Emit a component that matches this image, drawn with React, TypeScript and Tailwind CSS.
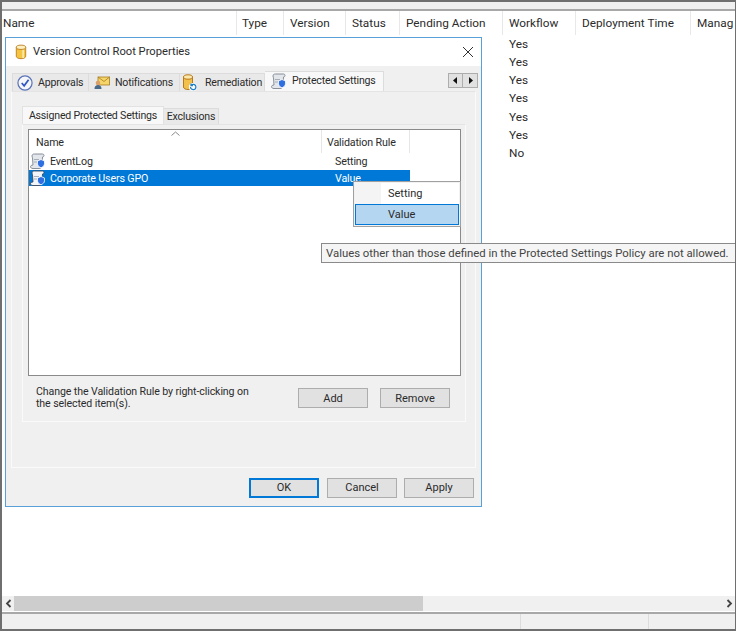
import React from "react";

const Cyl = () => (
  <svg width="12" height="16" viewBox="0 0 14 18" className="shrink-0">
    <path d="M1.500 3.500v10.500c0 1.600 2.500 2.800 5.500 2.800s5.500-1.200 5.500-2.800V3.500z" fill="#f5c542" stroke="#b8791a" />
    <path d="M9.500 5.500v10.500" stroke="#fbe9a8" strokeWidth="2" />
    <ellipse cx="7" cy="3.500" rx="5.500" ry="2.500" fill="#fdf0c0" stroke="#b8791a" />
  </svg>
);

const Check = () => (
  <svg width="16" height="16" viewBox="0 0 17 17" className="shrink-0">
    <circle cx="8.500" cy="8.500" r="7.500" fill="#f4f6fb" stroke="#5b74b8" strokeWidth="1.300" />
    <path d="M5 8.500l2.600 3L12.300 5" fill="none" stroke="#2f55c4" strokeWidth="1.800" />
  </svg>
);

const Mail = () => (
  <svg width="16" height="15" viewBox="0 0 16 15" className="shrink-0">
    <rect x="4" y="2" width="11.500" height="8" fill="#f6d66a" stroke="#a67c1e" strokeWidth=".8" />
    <path d="M4 2l6 4.500L15.500 2" fill="none" stroke="#a67c1e" strokeWidth=".8" />
    <circle cx="4" cy="8" r="2.300" fill="#d9a06a" />
    <path d="M0.500 14c0-3 1.500-4 3.500-4s3.500 1 3.500 4z" fill="#4a6a8a" />
  </svg>
);

const Remed = () => (
  <svg width="16" height="18" viewBox="0 0 16 18" className="shrink-0">
    <path d="M1.500 3v10c0 1.500 2 2.500 4.500 2.500s4.500-1 4.500-2.500V3z" fill="#f3c14b" stroke="#b8791a" />
    <ellipse cx="6" cy="3" rx="4.500" ry="2.200" fill="#fbe8ad" stroke="#b8791a" />
    <circle cx="11" cy="13" r="4" fill="#fff" />
    <path d="M8.500 13a2.700 2.700 0 1 0 1-2.100M9 9.500v2h2" fill="none" stroke="#1f7fc4" strokeWidth="1.300" />
  </svg>
);

const Shield = ({ selected = false }: { selected?: boolean }) => (
  <svg width="17" height="17" viewBox="0 0 17 17" className="shrink-0">
    <path
      d="M2 3c0-1.500 1-2 2.500-2h8c1 0 1.500.8 1.500 1.500S13.500 4 12.500 4l-.5 8c0 2-1 3.500-3 3.500H3c-1.500 0-2.500-.8-2.500-1.800S1.500 12 3 12l-.5-7C2.500 4.500 2 4 2 3z"
      fill={selected ? "#f2f6fb" : "#e3e6ea"}
      stroke={selected ? "#3d4a5c" : "#7c8590"}
      strokeWidth=".9"
    />
    <path d="M4 6.500h5M4 9h3" stroke="#98a0aa" strokeWidth=".8" />
    <path d="M7.500 8l3.500-1.500L14.500 8v2.800c0 2-1.700 3.100-3.500 4-1.800-.9-3.500-2-3.500-4z" fill="#2f6fe0" stroke="#fff" strokeWidth=".8" />
  </svg>
);

const Btn = ({ label, primary = false }: { label: string; primary?: boolean }) => (
  <div
    className={`w-[70px] h-5 flex items-center justify-center bg-[#e1e1e1] text-[11px] leading-none ${
      primary ? "border-2 border-[#0078d7]" : "border border-[#adadad]"
    }`}
  >
    {label}
  </div>
);

const columns = [
  { label: "Name", w: "w-[235px]", pl: "pl-[1px]" },
  { label: "Type", w: "w-[47px]", pl: "pl-[5px]" },
  { label: "Version", w: "w-[62px]", pl: "pl-[6px]" },
  { label: "Status", w: "w-[54px]", pl: "pl-[6px]" },
  { label: "Pending Action", w: "w-[103px]", pl: "pl-[6px]" },
  { label: "Workflow", w: "w-[73px]", pl: "pl-[6px]" },
  { label: "Deployment Time", w: "w-[115px]", pl: "pl-[6px]" },
  { label: "Manag", w: "w-[45px]", pl: "pl-[6px]" },
];

const workflow = ["Yes", "Yes", "Yes", "Yes", "Yes", "Yes", "No"];

export default function App() {
  return (
    <div
      className="relative w-[736px] h-[631px] overflow-hidden bg-white text-[#2b2b2b] flex flex-col border-2 border-r-[1px] border-[#6f6f6f]"
      style={{ fontFamily: 'Roboto, "Noto Sans", sans-serif' }}
    >
      <div className="h-[7px] bg-[#f0f0f0] shrink-0" />
      <div className="h-[2px] bg-[#a8a8a8] shrink-0" />
      <div className="h-[24px] flex shrink-0 text-[11.800px] whitespace-nowrap overflow-hidden">
        {columns.map((c) => (
          <div key={c.label} className={`${c.w} ${c.pl} pt-[2px] shrink-0 flex items-center border-r border-[#e8e8e8]`}>
            {c.label}
          </div>
        ))}
      </div>
      <div className="flex-1 pl-[507px] text-[11.800px] pt-[0.500px]">
        {workflow.map((v, i) => (
          <div key={i} className="h-[18.200px] flex items-center">
            {v}
          </div>
        ))}
      </div>
      <div className="h-[15px] bg-[#f0f0f0] flex items-stretch shrink-0 mb-[1px]">
        <div className="w-[12px] flex items-center justify-center text-[#444]">
          <svg width="7" height="9" viewBox="0 0 7 9"><path d="M5.500 1L2 4.500 5.500 8" fill="none" stroke="#444" strokeWidth="1.800" /></svg>
        </div>
        <div className="w-[409px] bg-[#cdcdcd]" />
        <div className="flex-1" />
        <div className="w-[12px] flex items-center justify-center">
          <svg width="7" height="9" viewBox="0 0 7 9"><path d="M1.500 1L5 4.500 1.500 8" fill="none" stroke="#444" strokeWidth="1.800" /></svg>
        </div>
      </div>
      <div className="h-[2px] bg-[#a8a8a8] shrink-0" />
      <div className="h-[15px] bg-[#f0f0f0] shrink-0 flex">
        <div className="w-[519px] border-r border-[#dcdcdc]" />
        <div className="w-[128px] border-r border-[#dcdcdc]" />
      </div>

      {/* dialog */}
      <div className="absolute left-[3px] top-[35px] w-[477px] h-[470px] bg-[#f0f0f0] border border-[#5aa0d8] flex flex-col">
        <div className="h-[28px] bg-white flex items-center pl-[9px] pr-[7px] gap-[6px] shrink-0">
          <Cyl />
          <span className="text-[11.200px] flex-1 whitespace-nowrap">Version Control Root Properties</span>
          <svg width="12" height="12" viewBox="0 0 12 12"><path d="M1 1l10 10M11 1L1 11" stroke="#333" strokeWidth="1" /></svg>
        </div>

        <div className="h-[25px] flex items-end pl-[6px] shrink-0 text-[10.600px] tracking-[-0.200px] whitespace-nowrap">
          <div className="h-[18px] w-[77px] flex items-center gap-[5px] pl-[4px] bg-[#e9e9e9] border border-b-0 border-[#dcdcdc]"><Check />Approvals</div>
          <div className="h-[18px] w-[91px] flex items-center gap-[5px] pl-[5px] bg-[#e9e9e9] border border-b-0 border-l-0 border-[#dcdcdc]"><Mail />Notifications</div>
          <div className="h-[18px] w-[85px] flex items-center gap-[7px] pl-[2px] bg-[#e9e9e9] border border-b-0 border-l-0 border-[#dcdcdc]"><Remed />Remediation</div>
          <div className="h-[20px] w-[119px] flex items-center gap-[4px] pl-[6px] bg-[#f8f8f8] border border-b-0 border-l-0 border-[#dcdcdc]"><Shield /><span className="pb-[2px]">Protected Settings</span></div>
          <div className="ml-auto mr-[3px] mb-[3px] flex h-[15px]">
            <div className="w-[15px] bg-[#e1e1e1] border border-[#adadad] flex items-center justify-center">
              <svg width="5" height="7" viewBox="0 0 5 7"><path d="M4 0L0 3.500 4 7z" fill="#111" /></svg>
            </div>
            <div className="w-[15px] bg-[#e1e1e1] border border-l-0 border-[#adadad] flex items-center justify-center">
              <svg width="5" height="7" viewBox="0 0 5 7"><path d="M1 0l4 3.500L1 7z" fill="#111" /></svg>
            </div>
          </div>
        </div>

        <div className="mx-[5px] h-[377px] border border-[#fafafa] border-t-[#e4e4e4] pt-[14px] px-[10px] shrink-0">
          <div className="h-[18px] flex items-end text-[10.600px] tracking-[-0.200px] whitespace-nowrap">
            <div className="h-[18px] w-[142px] flex items-center justify-center bg-[#f8f8f8] border border-b-0 border-[#e2e2e2]">Assigned Protected Settings</div>
            <div className="h-[16px] w-[55px] flex items-center justify-center bg-[#e9e9e9] border border-b-0 border-l-0 border-[#dcdcdc]">Exclusions</div>
          </div>
          <div className="h-[298px] w-[444px] border border-[#fafafa] border-t-[#e4e4e4] px-[5px] pt-[4px]">
            <div className="relative h-[247px] w-[433px] bg-white border border-[#8a8a8a] text-[10.700px] tracking-[-0.150px] whitespace-nowrap">
              <div className="h-[23px] flex">
                <div className="w-[293px] pl-[7px] flex items-end border-r border-[#e6e6e6] relative">
                  <span className="leading-[16px] mb-[2px]">Name</span>
                  <svg className="absolute left-[142px] top-[1px]" width="9" height="5" viewBox="0 0 9 5"><path d="M.5 4.500l4-3.500 4 3.500" fill="none" stroke="#888" /></svg>
                </div>
                <div className="w-[88px] pl-[5px] flex items-end border-r border-[#e6e6e6]">
                  <span className="leading-[16px] mb-[2px]">Validation Rule</span>
                </div>
              </div>
              <div className="h-[17px] flex items-center pl-[1px] w-[381px]">
                <Shield />
                <span className="ml-[3px] w-[285px] pt-[2px]">EventLog</span>
                <span className="pt-[2px]">Setting</span>
              </div>
              <div className="h-[16px] flex items-center pl-[1px] w-[381px] bg-[#0078d7] text-white">
                <Shield selected />
                <span className="ml-[3px] w-[285px] pt-[2px]">Corporate Users GPO</span>
                <span className="pt-[2px]">Value</span>
              </div>
            </div>
            <div className="flex items-center h-[46px] pl-[8px] pr-[10px] pb-[2px]">
              <div className="text-[10.600px] tracking-[-0.100px] leading-[12px] flex-1 whitespace-nowrap">
                Change the Validation Rule by right-clicking on
                <br />
                the selected item(s).
              </div>
              <Btn label="Add" />
              <div className="w-[12px]" />
              <Btn label="Remove" />
            </div>
          </div>
        </div>

        <div className="flex justify-end items-center gap-[7px] pr-[7px] pt-[1px] flex-1">
          <div className="mr-[1px]"><Btn label="OK" primary /></div>
          <Btn label="Cancel" />
          <Btn label="Apply" />
        </div>
      </div>

      {/* context menu */}
      <div className="absolute left-[351px] top-[179px] w-[108px] h-[46px] bg-[#f2f2f2] border border-[#a0a0a0] p-[1px] flex flex-col text-[11px]">
        <div className="h-[22px] flex items-center pl-[33px] pt-[2px] bg-[linear-gradient(to_right,#f4f4f4_26px,#ffffff_26px)]">Setting</div>
        <div className="h-[21px] flex items-center pl-[32px] pt-[1px] bg-[#b5d6f0] border border-[#0078d7]">Value</div>
      </div>

      {/* tooltip */}
      <div className="absolute left-[319px] top-[241px] w-[415px] h-[20px] bg-[#f5f5f5] border border-[#8a8a8a] flex items-center pl-[4px] pt-[1px] text-[11.350px] text-[#444] whitespace-nowrap">
        Values other than those defined in the Protected Settings Policy are not allowed.
      </div>
    </div>
  );
}
